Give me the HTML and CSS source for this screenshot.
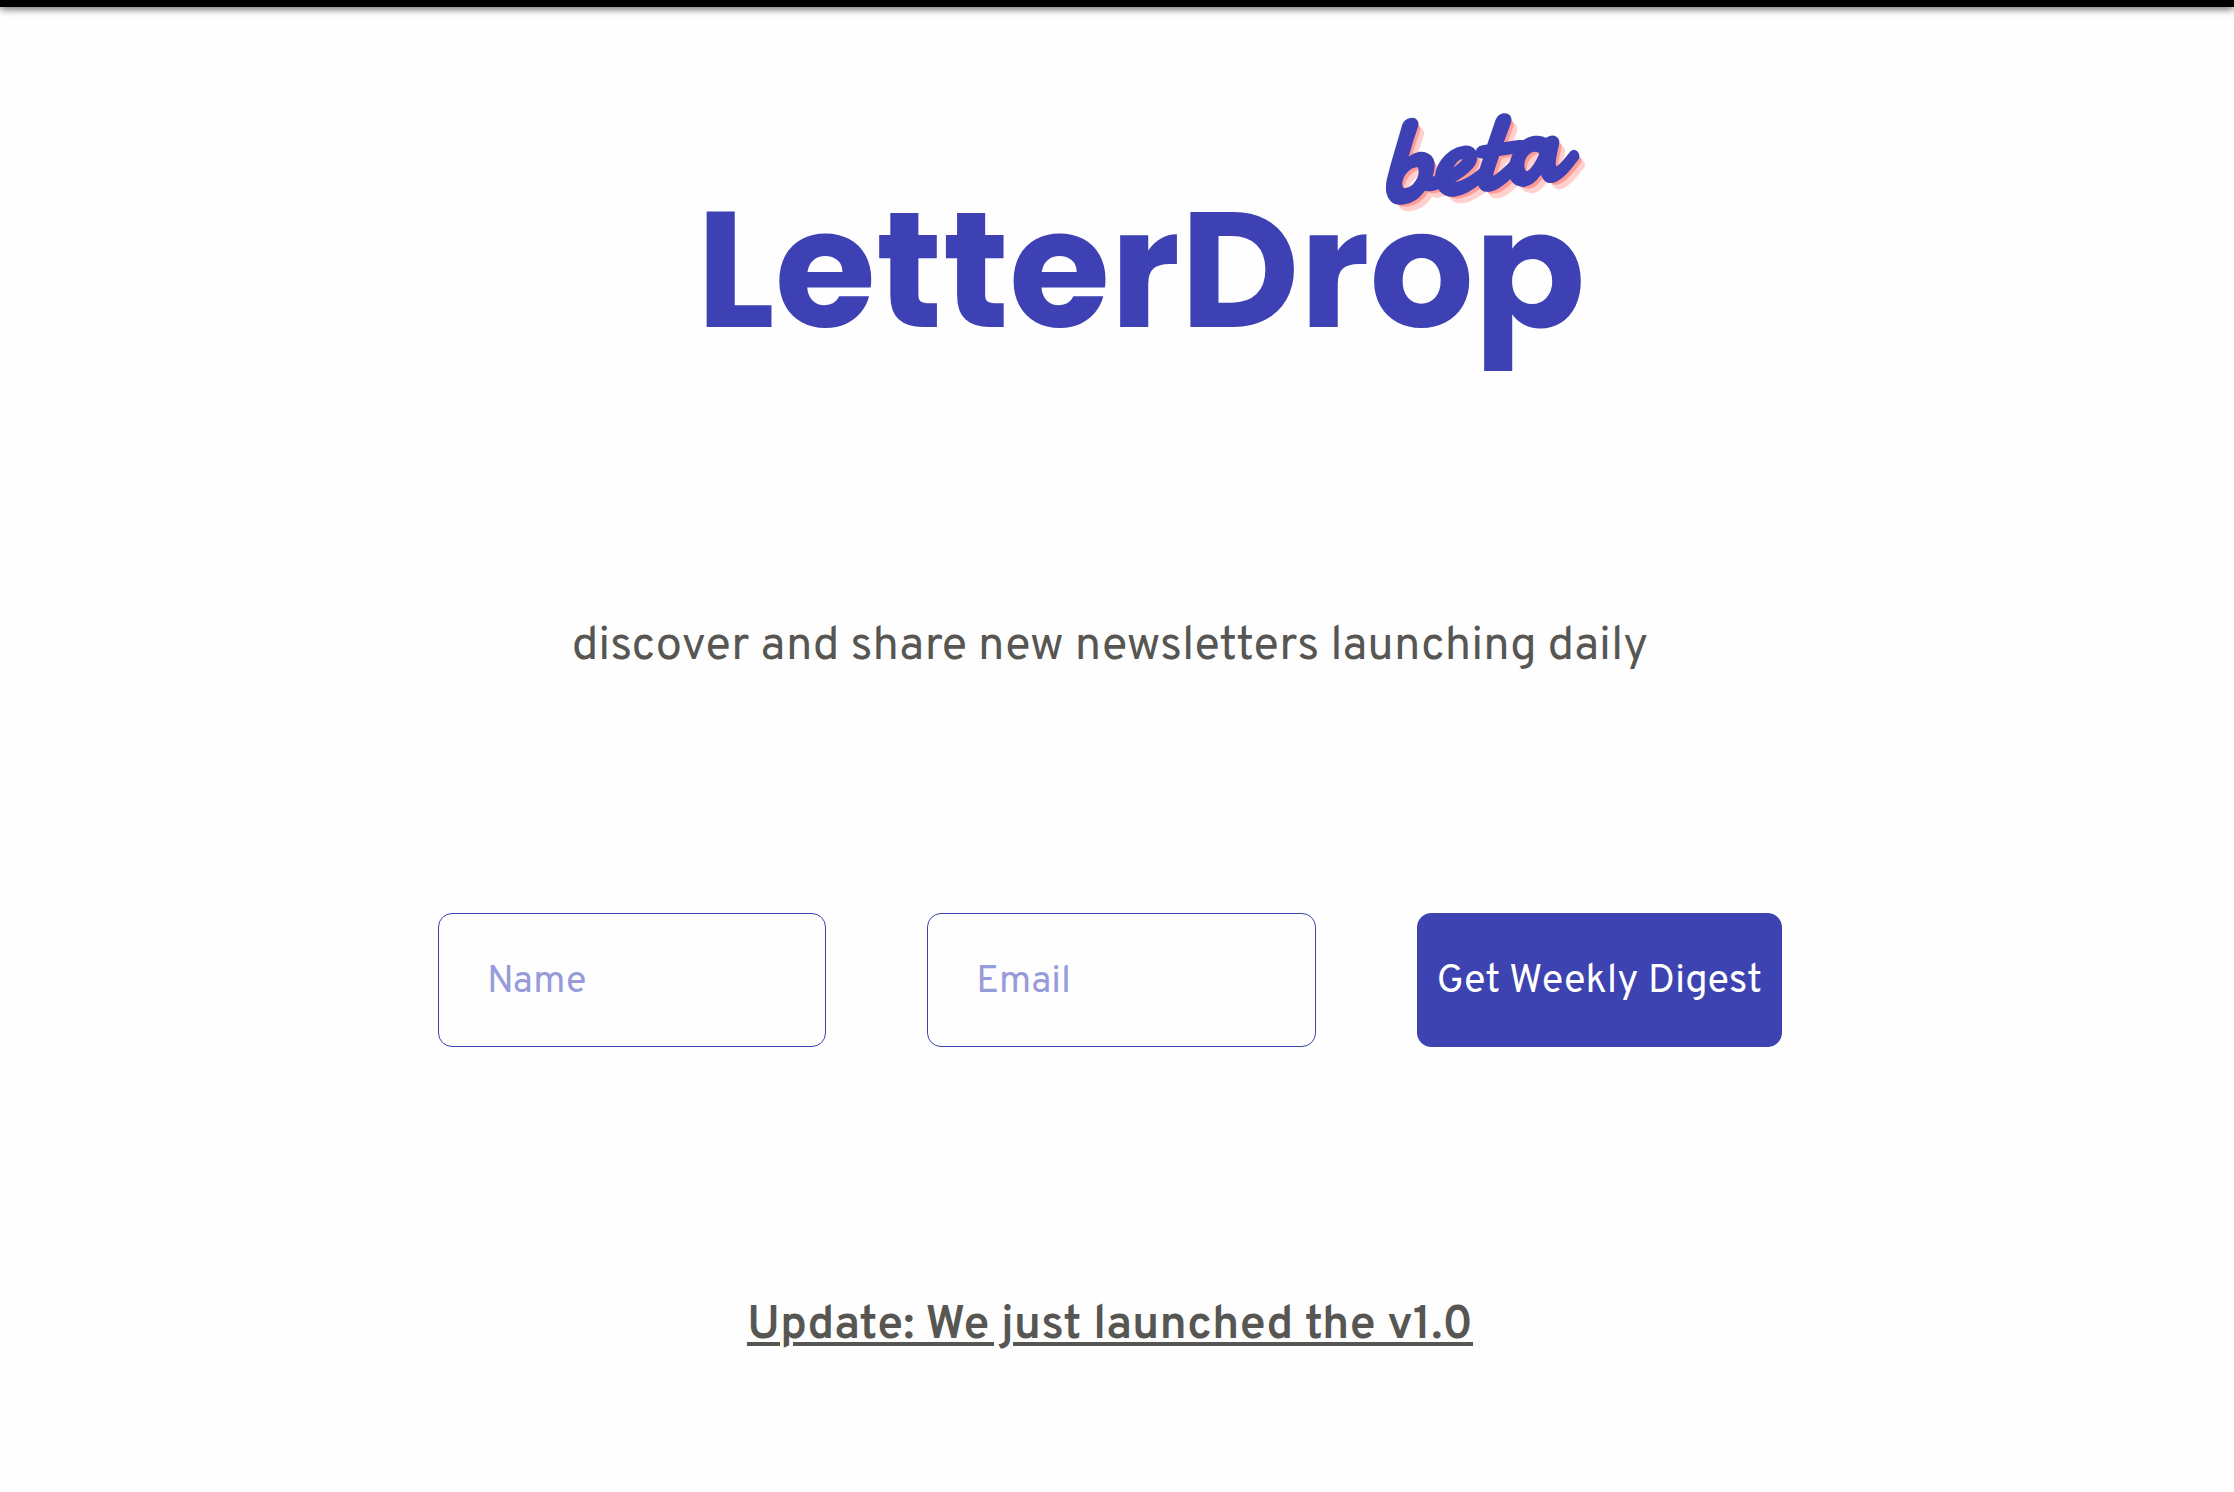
FILE: index.html
```html
<!DOCTYPE html>
<html lang="en">
<head>
  <meta charset="utf-8">
  <meta name="viewport" content="width=device-width, initial-scale=1">
  <title>LetterDrop</title>
  <link rel="stylesheet" href="styles.css">
</head>
<body>
  <div class="topbar"></div>
  <main class="page">
    <h1 class="logo">LetterDrop<span class="logo-badge">beta</span></h1>
    <p class="tagline">discover and share new newsletters launching daily</p>
    <form class="signup">
      <input class="field" type="text" name="name" placeholder="Name" aria-label="Name">
      <input class="field" type="email" name="email" placeholder="Email" aria-label="Email">
      <button class="submit" type="submit">Get Weekly Digest</button>
    </form>
    <a class="update" href="#">Update: We just launched the v1.0</a>
  </main>
</body>
</html>
```
FILE: styles.css
```css
* {
  box-sizing: border-box;
}

body {
  margin: 0;
  background: #fefefe;
  color: #575653;
  font-family: Overpass, Roboto, sans-serif;
}

.topbar {
  height: 7px;
  background: #000;
  box-shadow: 0 1px 8px rgba(0, 0, 0, 0.8);
}

.page {
  display: flex;
  flex-direction: column;
  align-items: center;
  padding: 163px 14px 120px 0;
}

.logo {
  position: relative;
  margin: 0 0 0 62px;
  color: #3d41b3;
  font-family: Poppins, Montserrat, Inter, sans-serif;
  font-size: 164px;
  font-weight: 700;
  line-height: 200px;
}

.logo-badge {
  position: absolute;
  top: -68px;
  right: 24px;
  font-family: Damion, Pacifico, cursive;
  font-size: 120px;
  font-weight: 400;
  line-height: 100px;
  transform: rotate(-8deg);
  -webkit-text-stroke: 5px #3d41b3;
  text-shadow: 2px 3px #ff9c96, 4px 5px #ff9c96, 6px 8px #ffd0cd, 7px 10px #ffd0cd;
}

.tagline {
  margin: 247px 0 0;
  font-size: 47px;
  line-height: 60px;
}

.signup {
  display: grid;
  grid-template-columns: 388fr 388fr 365fr;
  column-gap: 101px;
  width: 1344px;
  max-width: 100%;
  margin-top: 236px;
}

.field,
.submit {
  min-width: 0;
  height: 134px;
  border: 1px solid #3d43b0;
  border-radius: 14px;
  font: inherit;
}

.field {
  padding: 4px 48px 0;
  background: transparent;
  color: #3d43b0;
  font-size: 38px;
}

.field::placeholder {
  color: #979bd9;
  opacity: 1;
}

.submit {
  padding: 4px 0 0;
  background: #3d43b0;
  color: #fff;
  font-size: 40px;
  white-space: nowrap;
}

.update {
  margin-top: 249px;
  color: inherit;
  font-size: 47px;
  font-weight: 600;
  line-height: 60px;
  text-decoration-thickness: 4px;
  text-underline-offset: 4px;
}
```
